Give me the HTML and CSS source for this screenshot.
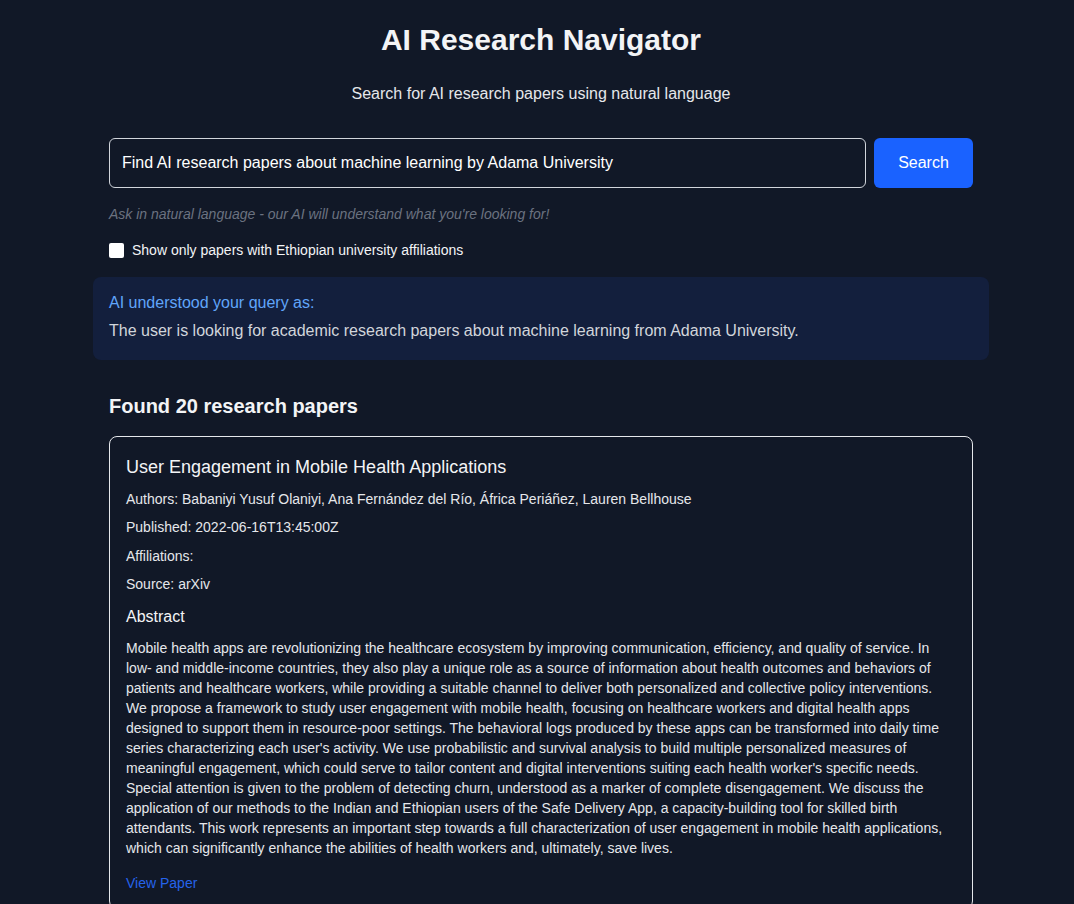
FILE: index.html
```html
<!DOCTYPE html>
<html lang="en">
<head>
<meta charset="utf-8">
<title>AI Research Navigator</title>
<link rel="stylesheet" href="styles.css">
</head>
<body>
<div class="page">
  <header class="header">
    <h1 class="title">AI Research Navigator</h1>
    <p class="subtitle">Search for AI research papers using natural language</p>
  </header>

  <section class="search">
    <form class="search-row">
      <input class="search-input" type="text" value="Find AI research papers about machine learning by Adama University">
      <button class="search-btn" type="button">Search</button>
    </form>
    <p class="hint">Ask in natural language - our AI will understand what you're looking for!</p>
    <label class="filter">
      <input class="filter-box" type="checkbox">
      <span>Show only papers with Ethiopian university affiliations</span>
    </label>
  </section>

  <section class="understood">
    <p class="understood-label">AI understood your query as:</p>
    <p class="understood-text">The user is looking for academic research papers about machine learning from Adama University.</p>
  </section>

  <section class="results">
    <h2 class="results-title">Found 20 research papers</h2>
    <article class="card">
      <h3 class="card-title">User Engagement in Mobile Health Applications</h3>
      <p class="meta">Authors: Babaniyi Yusuf Olaniyi, Ana Fernández del Río, África Periáñez, Lauren Bellhouse</p>
      <p class="meta">Published: 2022-06-16T13:45:00Z</p>
      <p class="meta meta-aff">Affiliations: </p>
      <p class="meta">Source: arXiv</p>
      <h4 class="abstract-title">Abstract</h4>
      <p class="abstract">Mobile health apps are revolutionizing the healthcare ecosystem by improving communication, efficiency, and quality of service. In low- and middle-income countries, they also play a unique role as a source of information about health outcomes and behaviors of patients and healthcare workers, while providing a suitable channel to deliver both personalized and collective policy interventions. We propose a framework to study user engagement with mobile health, focusing on healthcare workers and digital health apps designed to support them in resource-poor settings. The behavioral logs produced by these apps can be transformed into daily time series characterizing each user's activity. We use probabilistic and survival analysis to build multiple personalized measures of meaningful engagement, which could serve to tailor content and digital interventions suiting each health worker's specific needs. Special attention is given to the problem of detecting churn, understood as a marker of complete disengagement. We discuss the application of our methods to the Indian and Ethiopian users of the Safe Delivery App, a capacity-building tool for skilled birth attendants. This work represents an important step towards a full characterization of user engagement in mobile health applications, which can significantly enhance the abilities of health workers and, ultimately, save lives.</p>
      <a class="view-link" href="#">View Paper</a>
    </article>
  </section>
</div>
</body>
</html>
```

FILE: styles.css
```css
html, body {
  margin: 0;
  padding: 0;
  background: #111827;
  color: #f3f4f6;
  font-family: "Liberation Sans", Arial, sans-serif;
}

.page {
  width: 896px;
  margin-left: calc(50% - 444px);
  padding-bottom: 40px;
}

.header {
  text-align: center;
  padding-top: 22px;
}

.title {
  margin: 0;
  font-size: 30px;
  line-height: 36px;
  font-weight: 700;
  color: #f3f4f6;
}

.subtitle {
  margin: 26px 0 0;
  font-size: 16px;
  line-height: 20px;
  color: #e5e7eb;
}

.search {
  padding: 0 16px;
  margin-top: 34px;
}

.search-row {
  display: flex;
  gap: 8px;
  margin: 0;
}

.search-input {
  flex: 1;
  height: 50px;
  box-sizing: border-box;
  padding: 0 12px;
  border: 1px solid #d1d5db;
  border-radius: 6px;
  background: #111827;
  color: #ffffff;
  font-family: inherit;
  font-size: 16px;
  outline: none;
}

.search-btn {
  width: 99px;
  height: 50px;
  border: none;
  border-radius: 6px;
  background: #1a62ff;
  color: #ffffff;
  font-family: inherit;
  font-size: 16px;
  cursor: pointer;
}

.hint {
  margin: 18px 0 0;
  font-size: 14px;
  line-height: 16px;
  font-style: italic;
  color: #6b7280;
}

.filter {
  display: flex;
  align-items: center;
  gap: 8px;
  margin-top: 20px;
  font-size: 14px;
  color: #f3f4f6;
}

.filter-box {
  margin: 0;
  width: 15px;
  height: 15px;
  appearance: none;
  -webkit-appearance: none;
  background: #ffffff;
  border-radius: 2px;
}

.understood {
  margin-top: 19px;
  background: #131f3d;
  border-radius: 8px;
  padding: 16px 16px 19px;
}

.understood-label {
  margin: 0;
  font-size: 16px;
  line-height: 20px;
  color: #60a5fa;
}

.understood-text {
  margin: 8px 0 0;
  font-size: 16px;
  line-height: 20px;
  color: #d1d5db;
}

.results {
  padding: 0 16px;
  margin-top: 34px;
}

.results-title {
  margin: 0;
  font-size: 20px;
  line-height: 24px;
  font-weight: 700;
  color: #f3f4f6;
}

.card {
  margin-top: 18px;
  border: 1px solid #e5e7eb;
  border-radius: 8px;
  padding: 19px 16px 16px;
}

.card-title {
  margin: 0;
  font-size: 18px;
  line-height: 22px;
  font-weight: 400;
  color: #f3f4f6;
}

.meta {
  margin: 10px 0 0;
  font-size: 14px;
  line-height: 18px;
  color: #e5e7eb;
}

.card-title + .meta {
  margin-top: 12px;
}

.meta-aff {
  margin-top: 11px;
}

.abstract-title {
  margin: 14px 0 0;
  font-size: 16px;
  line-height: 20px;
  font-weight: 400;
  color: #f3f4f6;
}

.abstract {
  margin: 11px 0 0;
  font-size: 14px;
  line-height: 20px;
  color: #e5e7eb;
}

.view-link {
  display: inline-block;
  margin-top: 16px;
  font-size: 14px;
  line-height: 18px;
  color: #2563eb;
  text-decoration: none;
}
```
